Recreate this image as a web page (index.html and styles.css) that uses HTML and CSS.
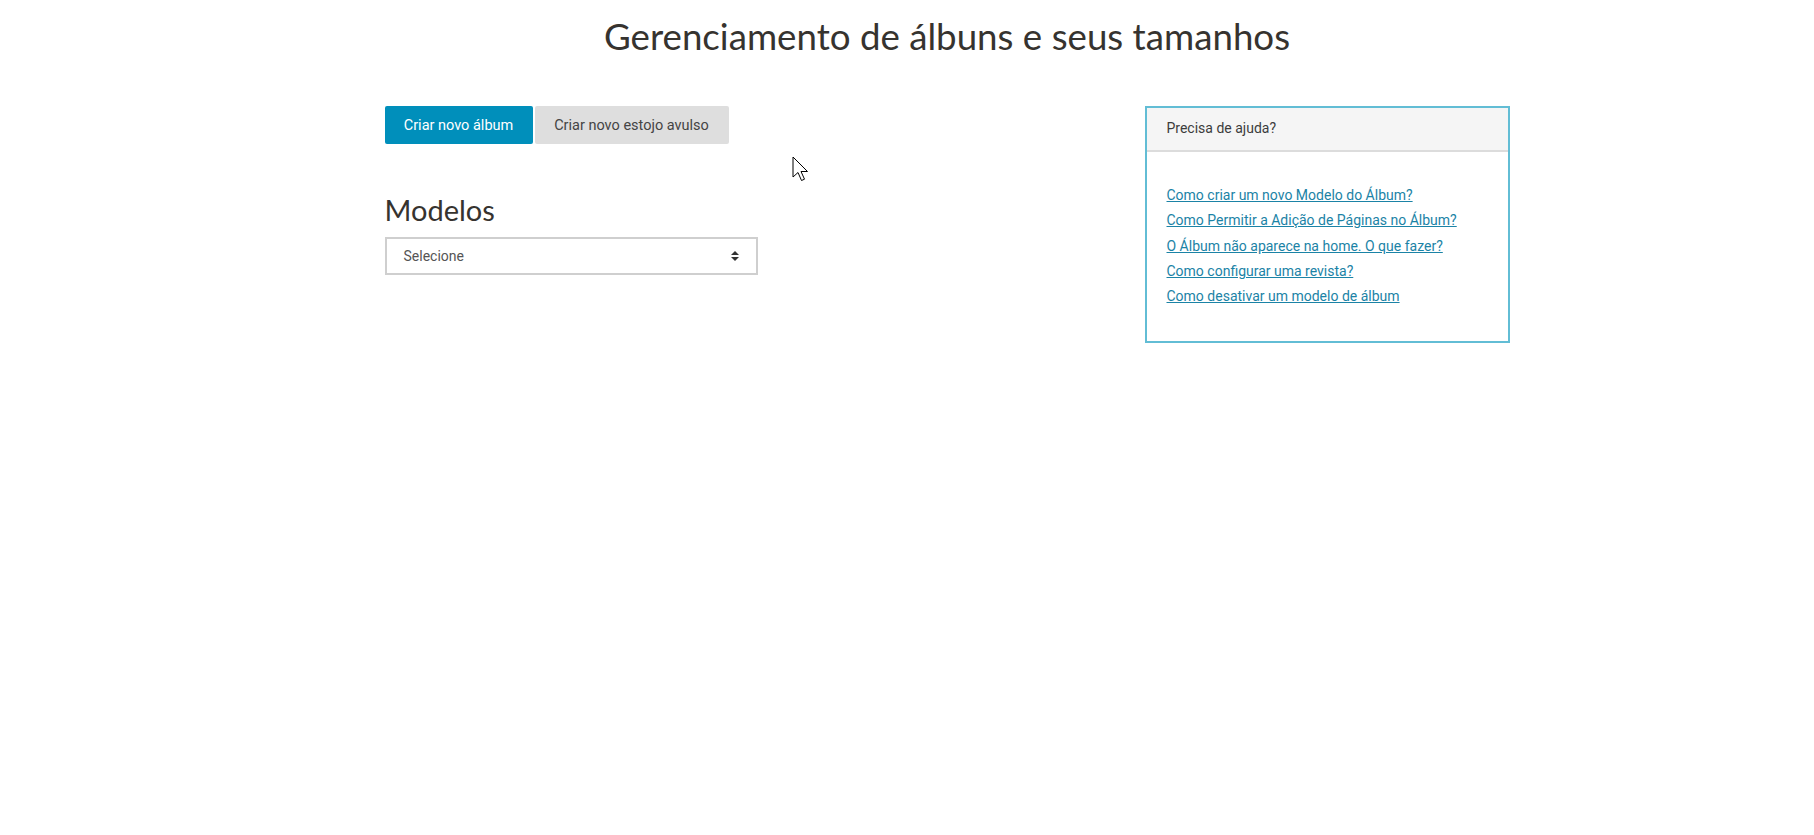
FILE: index.html
```html
<!DOCTYPE html>
<html lang="pt-BR">

<head>
    <meta charset="UTF-8">
    <meta name="viewport" content="width=device-width, initial-scale=1.0">
    <title>Gerenciamento de álbuns</title>
    <link rel="stylesheet" href="styles.css">
</head>

<body>
    <div class="main">
        <h1 class="page-title">Gerenciamento de álbuns e seus tamanhos</h1>

        <div class="content">
            <div class="left-col">
                <div class="actions">
                    <button class="btn btn-primary">Criar novo álbum</button>
                    <button class="btn btn-default">Criar novo estojo avulso</button>
                </div>

                <h2 class="section-title">Modelos</h2>
                <div class="select-box">
                    <span>Selecione</span>
                    <svg class="select-arrow" width="8" height="10" viewBox="0 0 8 10">
                        <path d="M4 0 L8 4 L0 4 Z M0 6 L8 6 L4 10 Z" fill="#333" />
                    </svg>
                </div>
            </div>

            <!-- Help panel -->
            <div class="help-panel">
                <div class="help-heading">Precisa de ajuda?</div>
                <div class="help-body">
                    <a href="#">Como criar um novo Modelo do Álbum?</a>
                    <a href="#">Como Permitir a Adição de Páginas no Álbum?</a>
                    <a href="#">O Álbum não aparece na home. O que fazer?</a>
                    <a href="#">Como configurar uma revista?</a>
                    <a href="#">Como desativar um modelo de álbum</a>
                </div>
            </div>
        </div>
    </div>

    <svg class="cursor" width="18" height="28" viewBox="0 0 18 28">
        <path d="M1 1 L1 21 L6 16.5 L9.5 24.5 L12.5 23.2 L9 15.5 L15.5 15.5 Z" fill="#fff" stroke="#000" stroke-width="1" stroke-linejoin="miter" />
    </svg>
</body>
</html>
```

FILE: styles.css
```css
body {
    margin: 0;
    background-color: #fff;
    font-family: Roboto, Arial, sans-serif;
    color: #333;
}

.main {
    margin-left: 80px;
}

.page-title {
    font-family: Lato, "Noto Sans", sans-serif;
    font-weight: normal;
    font-size: 36.7px;
    color: #36332f;
    text-align: center;
    margin: 0;
    padding-top: 14px;
    line-height: 44px;
}

.content {
    width: 1125px;
    margin: 48px auto 0;
    display: flex;
    justify-content: space-between;
    align-items: flex-start;
}

.left-col {
    width: 375px;
}

.actions {
    display: flex;
    gap: 2px;
}

.btn {
    font-family: Roboto, Arial, sans-serif;
    font-size: 14.5px;
    height: 38px;
    padding: 0 18px;
    border: none;
    border-radius: 2px;
    cursor: pointer;
}

.btn-primary {
    background-color: #008fbb;
    color: #fff;
    width: 148px;
}

.btn-default {
    background-color: #dedede;
    color: #444;
    width: 194px;
}

.section-title {
    font-family: Lato, "Noto Sans", sans-serif;
    font-weight: normal;
    font-size: 29px;
    color: #36332f;
    margin: 48px 0 9px;
    line-height: 36px;
}

.select-box {
    width: 373px;
    height: 38px;
    box-sizing: border-box;
    border: 2px solid #cfcfcf;
    display: flex;
    align-items: center;
    justify-content: space-between;
    padding: 0 17px 0 17px;
    font-size: 14px;
    color: #555;
}

.help-panel {
    width: 365px;
    box-sizing: border-box;
    border: 2px solid #62bdd5;
}

.help-heading {
    background-color: #f5f5f5;
    border-bottom: 2px solid #dcdcdc;
    height: 42px;
    line-height: 40px;
    padding: 0 20px;
    font-size: 14px;
    color: #3c3c3c;
}

.help-body {
    display: flex;
    flex-direction: column;
    padding: 35px 20px 37px;
    gap: 9.3px;
}

.help-body a {
    font-size: 14px;
    color: #1b83a6;
    text-decoration: underline;
    line-height: 16px;
}

.cursor {
    position: absolute;
    left: 792px;
    top: 156px;
}
```
